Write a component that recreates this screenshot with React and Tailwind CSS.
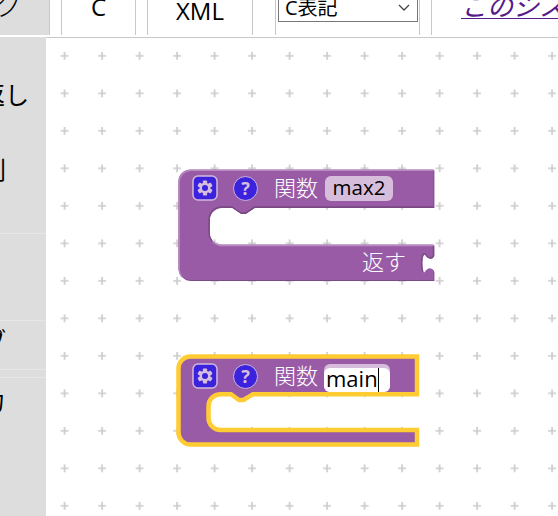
const jp = "font-['Open_Sans','Noto_Sans_CJK_JP',sans-serif]";

function Gear() {
  return (
    <svg className="h-[26px] w-[26px] shrink-0" viewBox="0 0 26 26">
      <rect x="1" y="1" width="24" height="24" rx="5" fill="#3b22dc" stroke="#d2b9dc" strokeWidth="1.5" />
      <g fill="#d6bede">
        {[0, 60, 120].map((a) => (
          <rect key={a} x="10.9" y="5.4" width="4.2" height="15.2" rx="0.8" transform={`rotate(${a} 13 13)`} />
        ))}
      </g>
      <circle cx="13" cy="13" r="4.2" fill="#3b22dc" stroke="#d6bede" strokeWidth="2.4" />
    </svg>
  );
}

function Help() {
  return (
    <div className="flex h-[25px] w-[25px] shrink-0 items-center justify-center rounded-full border-[1.5px] border-[#cdb4dd] bg-[#3b22dc] font-['Noto_Sans',sans-serif] text-[18px] leading-none font-bold text-[#d6bede]">
      ?
    </div>
  );
}

function FunctionHeader({ children }) {
  return (
    <div className="relative flex h-[38px] items-center pl-[14px]">
      <Gear />
      <div className="ml-[15px] flex"><Help /></div>
      <span className="ml-4 w-[44px] pb-[3px] text-[22px] leading-none font-light whitespace-nowrap text-white">関数</span>
      {children}
    </div>
  );
}

function MaxBlock() {
  const d =
    "M0.7 12.8A12 12 0 0 1 12.7 0.8H256V38.5H76.5L67.5 44.5H63L54 38.5H43.5A12 12 0 0 0 31.5 50.5V64A12 12 0 0 0 43.5 76H256V86.5C254 91 249.5 89.5 247.5 86C245.5 83 244 87.5 244 94.5C244 101.5 245.5 106 247.5 103C249.5 99.5 254 98 256 102.5V111.5H12.7A12 12 0 0 1 0.7 99.5Z";
  return (
    <div className="absolute top-[169px] left-[178px] h-[113px] w-[258px]">
      <svg className="absolute inset-0 h-full w-full overflow-visible" viewBox="0 0 258 113">
        <path d={d} fill="#7b4984" transform="translate(.4 .4)" />
        <path d={d} fill="#995ba5" transform="translate(-.4 -.4)" />
        <path
          d="M4 108A12 12 0 0 1 1.2 99.5V12.8A12 12 0 0 1 12.7 1.3H255.5M35 72.5A12 12 0 0 0 43.5 76.5H255.5"
          fill="none"
          stroke="#b88cc0"
          strokeWidth="1.3"
        />
        <path
          d="M255.5 38H76.5L67.5 44H63L54 38H43.5A12.5 12.5 0 0 0 31 50.5V64Q31 68 34 72M255.4 77V86.5C253.5 90.5 249.5 89 247.5 85.5C245.5 82.5 243.6 87.5 243.6 94.5Q243.6 100 245 103"
          fill="none"
          stroke="#7b4984"
          strokeWidth="1.3"
        />
      </svg>
      <FunctionHeader>
        <span className="ml-[7px] flex h-[25px] w-[68px] items-center justify-center rounded-[6px] bg-[#d6bddb] pb-px text-[20.5px] leading-none text-black">
          max2
        </span>
      </FunctionHeader>
      <div className="relative mt-[38px] flex h-[35px] items-center justify-end pr-[30px] pb-[4px] text-[22px] leading-none font-light text-white">返す</div>
    </div>
  );
}

function MainBlock() {
  return (
    <div className="absolute top-[356px] left-[178px] h-[90px] w-[240px]">
      <svg className="absolute inset-0 h-full w-full overflow-visible" viewBox="0 0 240 90">
        <path
          d="M0.5 12.5A12 12 0 0 1 12.5 0.5H239V38.2H75L65.5 44H61L53 38.2H42.5A12 12 0 0 0 30.5 50.2V62A12 12 0 0 0 42.5 74H239V88.5H12.5A12 12 0 0 1 0.5 76.5Z"
          fill="#995ba5"
          stroke="#fc3"
          strokeWidth="4.5"
        />
      </svg>
      <div className="pt-px">
        <FunctionHeader>
          <span className="mb-[3px] ml-[6px] flex h-[28px] w-[66px] self-end rounded-[6px] bg-[#d6bddb] pt-1">
            <span className="flex h-6 flex-1 items-center rounded-[6px] bg-white pl-[2px] text-black">
              <span className="-mt-[5px] text-[22px] leading-none">main</span>
              <i className="h-6 w-px bg-black" />
            </span>
          </span>
        </FunctionHeader>
      </div>
    </div>
  );
}

function Workspace() {
  return (
    <main className="relative h-full flex-1 overflow-hidden border-t border-[#c8c8c8] bg-white">
      <svg className="block h-full w-full">
        <defs>
          <pattern id="grid" x="-0.15" y="-0.9" width="37.5" height="37.5" patternUnits="userSpaceOnUse">
            <path d="M14.75 18.75H22.75M18.75 14.75V22.75" stroke="#ccc" strokeWidth="1.7" />
          </pattern>
        </defs>
        <rect width="100%" height="100%" fill="url(#grid)" />
      </svg>
    </main>
  );
}

function Sidebar() {
  return (
    <aside className="relative h-full w-[46px] shrink-0 overflow-hidden bg-[#ddd] text-[24px] leading-none text-black">
      <div className="flex h-[197px] flex-col items-end border-b border-[#e6e6e6] pt-[46px]">
        <div className="mr-[17px] whitespace-nowrap">繰返し</div>
        <div className="mt-[51px] mr-[40px] whitespace-nowrap">配列</div>
      </div>
      <div className="h-[87px] border-b border-[#e6e6e6]" />
      <div className="flex h-[49px] items-start justify-end border-b border-[#e6e6e6] pt-[8px] pr-[40px] whitespace-nowrap">グラブ</div>
      <div className="h-2 border-b border-[#e6e6e6]" />
      <div className="flex justify-end pt-[11px] pr-[41px] whitespace-nowrap">入力</div>
    </aside>
  );
}

function Toolbar() {
  return (
    <header className="flex h-[35px] shrink-0 overflow-hidden text-black">
      <div className="flex w-[50px] shrink-0 justify-end border-r border-[#c8c8c8] bg-[#ddd] pr-[27px] text-[28px] leading-none font-light whitespace-nowrap">
        <span className="-mt-[9px]">ブロック</span>
      </div>
      <div className="ml-[11px] w-[75px] shrink-0 border-x border-[#c8c8c8] text-center text-[24px] leading-[14px]">C</div>
      <div className="ml-[11px] w-[106px] shrink-0 border-x border-[#c8c8c8] text-center text-[24px] leading-[21px]">XML</div>
      <div className="ml-[22px] w-[145px] shrink-0 border-x border-[#c8c8c8] pl-[2px]">
        <div className="flex h-[22px] w-[140px] items-center justify-between border border-t-0 border-[#777] pr-[7px] pb-[6px] pl-[6px]">
          <span className="text-[20px] leading-none">C表記</span>
          <svg className="h-[7px] w-3" viewBox="0 0 12 7" fill="none" stroke="#444" strokeWidth="1.3">
            <path d="M1 1L6 6L11 1" />
          </svg>
        </div>
      </div>
      <div className="ml-[11px] w-[150px] shrink-0 border-l border-[#c8c8c8] pl-[29px]">
        <a className="block h-[19px] border-b border-[#551a8b] text-[26px] leading-[13px] whitespace-nowrap text-[#551a8b] italic">このシステム</a>
      </div>
    </header>
  );
}

export default function App() {
  return (
    <div className={`relative flex h-screen w-screen flex-col overflow-hidden bg-white ${jp}`}>
      <Toolbar />
      <div className="mt-[2px] flex min-h-0 flex-1">
        <Sidebar />
        <Workspace />
      </div>
      <MaxBlock />
      <MainBlock />
    </div>
  );
}
